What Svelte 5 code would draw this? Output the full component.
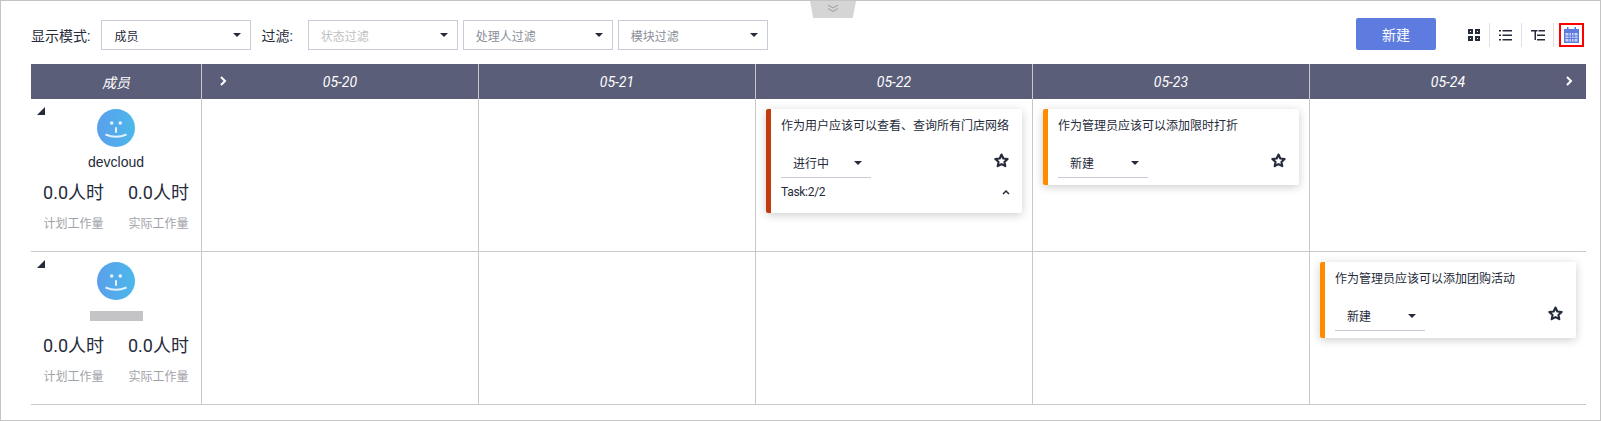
<script lang="ts">
	const dates = ['05-20', '05-21', '05-22', '05-23', '05-24'];
	const members = [
		{ name: 'devcloud', card: { col: 2, title: '作为用户应该可以查看、查询所有门店网络', status: '进行中', color: '#c23b0c', task: 'Task:2/2' } },
		{ name: '', card: { col: 4, title: '作为管理员应该可以添加团购活动', status: '新建', color: '#ff8c00', task: '' } }
	];
	const rows = [
		{ member: members[0], cards: [members[0].card, { col: 3, title: '作为管理员应该可以添加限时打折', status: '新建', color: '#ff8c00', task: '' }] },
		{ member: members[1], cards: [members[1].card] }
	];
	const filters = ['状态过滤', '处理人过滤', '模块过滤'];
</script>

<div class="page">
	<div class="collapse-tab">
		<svg width="12" height="9" viewBox="0 0 12 9" fill="none" stroke="#9a9a9a" stroke-width="1"><path d="M1 1l5 3 5-3M1 4.500l5 3 5-3" /></svg>
	</div>

	<div class="toolbar">
		<span class="label">显示模式:</span>
		<div class="select mode"><span>成员</span><i class="caret"></i></div>
		<span class="label filter-label">过滤:</span>
		{#each filters as f, i}
		<div class="select filter"><span class:light={i === 0}>{f}</span><i class="caret"></i></div>
		{/each}
		<button class="new-btn">新建</button>
		<div class="views">
			<span class="view">
				<svg width="12" height="12" viewBox="0 0 12 12" fill="#252b3a"><path d="M0 0h5v5H0zM7 0h5v5H7zM0 7h5v5H0zM7 7h5v5H7z" /><path fill="#fff" d="M2 2h1v1H2zM9 2h1v1H9zM2 9h1v1H2zM9 9h1v1H9z" /></svg>
			</span>
			<span class="view">
				<svg width="13" height="11" viewBox="0 0 13 11" fill="#252b3a"><path d="M0 0h2v1.500H0zM3.500 0H13v1.500H3.500zM0 4.500h2V6H0zM3.500 4.500H13V6H3.500zM0 9h2v1.500H0zM3.500 9H13v1.500H3.500z" /></svg>
			</span>
			<span class="view">
				<svg width="14" height="11" viewBox="0 0 14 11" fill="#252b3a"><path d="M0 0h6.500v1.500H5v8.500H3.500V1.500H0zM7.500 0H14v1.500H7.500zM6 4.500h8V6H6zM6 9h8v1.500H6z" /></svg>
			</span>
			<span class="view active">
				<svg width="15" height="16" viewBox="0 0 15 16"><path fill="#5e7ce0" d="M0 2h3V0h1.500v2h6V0H12v2h3v14H0z" /><path fill="#c9d4f6" d="M1.500 6h12v8.500h-12z" /><path fill="#5e7ce0" d="M4.500 6h1v8.500h-1zM7 6h1v8.500H7zM9.500 6h1v8.500h-1zM1.500 8.500h12v1h-12zM1.500 11h12v1h-12z" /></svg>
			</span>
		</div>
	</div>

	<div class="board">
		<div class="head member-col">成员</div>
		{#each dates as d, i}
		<div class="head">
			{#if i === 0}<svg class="arrow left" width="7" height="10" viewBox="0 0 7 10" fill="none" stroke="#fff" stroke-width="2"><path d="M1 1l4 4-4 4" /></svg>{/if}
			{d}
			{#if i === 4}<svg class="arrow right" width="7" height="10" viewBox="0 0 7 10" fill="none" stroke="#fff" stroke-width="2"><path d="M1 1l4 4-4 4" /></svg>{/if}
		</div>
		{/each}

		{#each rows as row}
		<div class="cell member">
			<i class="corner"></i>
			<svg class="avatar" width="38" height="38" viewBox="0 0 38 38">
				<defs>
					<linearGradient id="av" x1="0" y1="0" x2="1" y2="0">
						<stop offset="0" stop-color="#5a9fec" />
						<stop offset="1" stop-color="#4cb8ea" />
					</linearGradient>
				</defs>
				<circle cx="19" cy="19" r="19" fill="url(#av)" />
				<circle cx="14.700" cy="14" r="1.800" fill="#e4f1fc" />
				<circle cx="23.300" cy="14" r="1.800" fill="#e4f1fc" />
				<rect x="18" y="18" width="2" height="6" rx="1" fill="#e4f1fc" />
				<path d="M8.500 25.500q10.500 4.500 21 0" fill="none" stroke="#e4f1fc" stroke-width="2" />
			</svg>
			{#if row.member.name}
			<div class="name">{row.member.name}</div>
			{:else}
			<div class="name"><span class="blur"></span></div>
			{/if}
			<div class="stats">
				<div><div class="val">0.0人时</div><div class="cap">计划工作量</div></div>
				<div><div class="val">0.0人时</div><div class="cap">实际工作量</div></div>
			</div>
		</div>
		{#each dates as d, i}
		<div class="cell">
			{#each row.cards.filter((c) => c.col === i) as c}
			<div class="card" style="border-left-color: {c.color}">
				<div class="title">{c.title}</div>
				<div class="card-row">
					<div class="status"><span>{c.status}</span><i class="caret"></i></div>
					<svg class="star" width="15" height="15" viewBox="0 0 24 24" fill="none" stroke="#252b3a" stroke-width="3.400" stroke-linejoin="round"><path d="M12 2.500l2.900 6.300 6.900.8-5.100 4.700 1.400 6.800-6.100-3.400-6.100 3.400 1.400-6.800-5.100-4.700 6.900-.8z" /></svg>
				</div>
				{#if c.task}
				<div class="task">
					<span class="task-text">{c.task}</span>
					<svg width="8" height="6" viewBox="0 0 8 6" fill="none" stroke="#252b3a" stroke-width="1.500"><path d="M1 5l3-3 3 3" /></svg>
				</div>
				{/if}
			</div>
			{/each}
		</div>
		{/each}
		{/each}
	</div>
</div>

<style>
	:global(body) { margin: 0; background: #fff; }
	.page { position: relative; box-sizing: border-box; width: 1601px; height: 421px; border: 1px solid #c4c4c4; padding: 19px 14px 0 30px; font-family: Roboto, "Noto Sans CJK SC", sans-serif; color: #252b3a; font-size: 12px; }
	.collapse-tab { position: absolute; top: 0; left: 809px; width: 46px; height: 17px; background: #d5d5d5; clip-path: polygon(0 0, 100% 0, 93% 100%, 7% 100%); border-radius: 0 0 3px 3px; display: flex; justify-content: center; padding-top: 3px; box-sizing: border-box; }

	.toolbar { display: flex; align-items: center; height: 30px; margin-bottom: 14px; }
	.label { font-size: 14px; margin-right: 11px; white-space: nowrap; }
	.filter-label { margin-left: 5px; margin-right: 15px; }
	.select { box-sizing: border-box; width: 150px; height: 30px; border: 1px solid #c9ccd8; display: flex; align-items: center; justify-content: space-between; padding: 0 9px 0 12px; margin-right: 5px; }
	.select.filter { color: #8a8e99; }
	.select .light { color: #c0c0c0; }
	.caret { width: 0; height: 0; border-left: 4px solid transparent; border-right: 4px solid transparent; border-top: 4px solid #252b3a; }
	.new-btn { margin-left: auto; margin-top: -2px; width: 80px; height: 32px; border: none; border-radius: 2px; background: #5e7ce0; color: #fff; font: inherit; font-size: 14px; }
	.views { display: flex; align-items: center; margin-left: 22px; margin-right: 2px; }
	.view { box-sizing: border-box; width: 32px; height: 24px; display: flex; align-items: center; justify-content: center; border-right: 1px solid #dfe1e6; }
	.view.active { width: 25px; margin-left: 5px; border: 2px solid #f00; }

	.board { display: grid; grid-template-columns: 170px repeat(5, 1fr); grid-template-rows: 35px 153px 152px; border-bottom: 1px solid #c8c8c8; }
	.head { position: relative; background: #5a5e78; color: #fff; font-style: italic; font-size: 14px; display: flex; align-items: center; justify-content: center; border-left: 1px solid #c8c8c8; }
	.head.member-col { border-left: none; }
	.arrow { position: absolute; top: 12px; }
	.arrow.left { left: 18px; }
	.arrow.right { right: 13px; }
	.cell { border-left: 1px solid #c8c8c8; border-bottom: 1px solid #c8c8c8; padding: 10px 10px 0 10px; min-width: 0; }
	.board > .cell:nth-last-child(-n+6) { border-bottom: none; }
	.cell.member { position: relative; border-left: none; padding: 10px 0 0; display: flex; flex-direction: column; align-items: center; }
	.corner { position: absolute; top: 8px; left: 6px; width: 0; height: 0; border-left: 8px solid transparent; border-bottom: 8px solid #252b3a; }
	.avatar { display: block; }
	.name { font-size: 14px; font-family: "Liberation Sans", sans-serif; height: 15px; margin-top: 8px; line-height: 15px; }
	.blur { display: block; width: 53px; height: 10px; margin-top: 3px; background: #c4c4c6; }
	.stats { display: flex; gap: 24px; margin-top: 11px; }
	.val { font-size: 18px; line-height: 24px; text-align: center; white-space: nowrap; }
	.cap { font-size: 12px; color: #a0a2a8; text-align: center; margin-top: 11px; line-height: 16px; }

	.card { box-sizing: border-box; width: 256px; background: #fff; border-left: 5px solid; border-radius: 2px; box-shadow: 0 2px 10px rgba(0, 0, 0, 0.2); padding: 8px 13px 0 10px; }
	.title { font-size: 12px; line-height: 18px; height: 31px; white-space: nowrap; }
	.card-row { display: flex; align-items: center; justify-content: space-between; }
	.status { box-sizing: border-box; width: 90px; height: 30px; border-bottom: 1px solid #c9ccd8; display: flex; align-items: center; justify-content: space-between; padding: 0 9px 0 12px; }
	.star { margin-top: -5px; }
	.task { display: flex; align-items: center; justify-content: space-between; height: 28px; margin-right: -1px; }
	.task-text { letter-spacing: -0.3px; }
	.card:has(.task) { padding-bottom: 7px; }
	.card:not(:has(.task)) { height: 76px; }
</style>
